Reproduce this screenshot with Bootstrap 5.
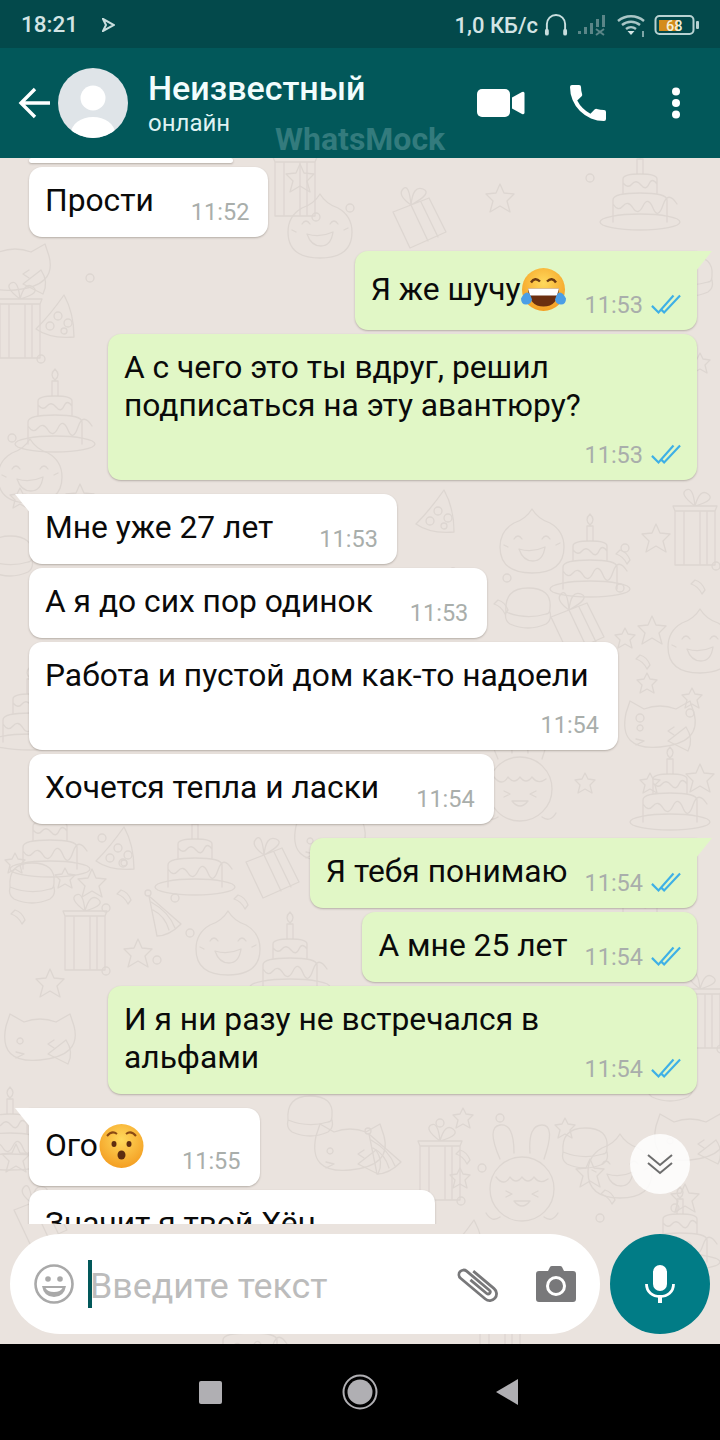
<!DOCTYPE html>
<html lang="ru">
<head>
  <meta charset="UTF-8">
  <meta name="viewport" content="width=device-width, initial-scale=1.0">
  <title>Неизвестный</title>
  <link href="https://cdn.jsdelivr.net/npm/bootstrap@5.3.3/dist/css/bootstrap.min.css" rel="stylesheet">
  <style>
    body { width: 720px; height: 1440px; overflow: hidden; font-family: Roboto, "Liberation Sans", sans-serif; background: #000; }
    .phone { height: 1440px; }
    .status-bar { height: 48px; padding: 2px 20px 0 21px; background: #03494b; color: #d3e4e4; font-size: 22.5px; font-weight: 500; }
    .net-speed { margin-left: auto; margin-right: 6px; font-size: 22px; }
    .head-set { margin-right: 9px; }
    .sig-bars { margin-right: 10px; }
    .wifi-mark { margin-right: 6px; }
    .chat-head { height: 110px; background: #02585a; color: #fff; position: relative; }
    .back-arrow { margin-left: 18px; }
    .avatar { width: 70px; height: 70px; margin-left: 8px; }
    .peer { margin-left: 20px; }
    .peer-name { font-size: 34px; font-weight: 500; line-height: 40px; margin-top: -2px; color: #f2fdfd; }
    .peer-state { font-size: 24px; line-height: 28px; color: #dff2f2; margin-top: 1px; }
    .watermark { position: absolute; left: 275px; top: 73px; font-size: 32px; font-weight: 700; line-height: 36px; color: #337b7d; }
    .video-icon { margin-right: 39px; }
    .dots-icon { margin-left: 58px; margin-right: 38px; }
    .chat-area { height: 1186px; background: #eae3de; position: relative; overflow: hidden; }
    .doodles { position: absolute; left: 0; top: 0; color: #ddd6d1; }
    .msg-list { position: relative; height: 1066px; overflow: hidden; padding: 0 23px 0 29px; }
    .bubble { position: relative; padding: 15px 19px 11px 16px; font-size: 31.75px; line-height: 38px; color: #0a0a0a; border-radius: 13px; box-shadow: 0 1px 2px rgba(60, 50, 40, .3); flex: none; }
    .in { background: #fff; align-self: flex-start; }
    .out { background: #e1f7c6; align-self: flex-end; padding-right: 16px; }
    .gap-same { margin-top: 4px; }
    .gap-new { margin-top: 14px; }
    .stub { width: 204px; height: 5px; padding: 0; margin-top: 0; }
    .wide { width: 589px; }
    .cut-off { width: 406px; }
    .msg-text { margin-bottom: 6px; white-space: nowrap; }
    .with-emoji { line-height: 46px; }
    .out .with-emoji { line-height: 47px; }
    .with-emoji svg { vertical-align: top; margin-left: 0; }
    .meta { font-size: 23.5px; line-height: 28px; color: #a9aeab; white-space: nowrap; }
    .in .meta { margin-left: 37px; }
    .out .meta { margin-left: 17px; }
    .in .meta-far { margin-left: 46px; }
    .meta svg { margin-left: 8px; vertical-align: -2px; }
    .meta-row { margin-top: 16px; }
    .meta-row .meta, .in .meta-row .meta { margin-left: 0; }
    .tail-in::before, .tail-out::before { content: ""; position: absolute; top: 0; width: 16px; height: 20px; }
    .tail-in { border-top-left-radius: 0; }
    .tail-in::before { left: -14px; background: #fff; clip-path: polygon(0 0, 100% 0, 100% 100%); }
    .tail-out { border-top-right-radius: 0; }
    .tail-out::before { right: -15px; background: #e1f7c6; clip-path: polygon(0 0, 100% 0, 0 100%); }
    .jump-btn { position: absolute; left: 630px; top: 976px; width: 60px; height: 60px; background: rgba(255, 255, 255, .85); }
    .composer { position: absolute; left: 10px; right: 10px; top: 1076px; height: 100px; gap: 10px; }
    .input-pill { width: 590px; height: 100px; background: #fff; border-radius: 50px; padding: 0 24px; }
    .caret-line { width: 4px; height: 48px; background: #02585a; margin-left: 14px; flex: none; }
    .hint { font-size: 35.8px; color: #bcbcbc; margin-left: -2px; margin-top: 6px; white-space: nowrap; }
    .clip-icon { margin-left: auto; }
    .camera-icon { margin-left: 36px; }
    .mic-btn { width: 100px; height: 100px; background: #017c86; flex: none; }
    .nav-keys { height: 96px; background: #000; padding-left: 199px; }
    .nav-square { width: 23px; height: 23px; background: #b0afb3; border-radius: 2px; }
    .nav-home { margin-left: 120px; }
    .nav-back { margin-left: 117px; }
  </style>
</head>
<body>
  <div class="phone d-flex flex-column">
    <div class="status-bar d-flex align-items-center">
      <span>18:21</span>
      <svg class="ms-4" width="13" height="14" viewBox="0 0 13 14"><path d="M1 1l11 6-11 6 3-6z" fill="none" stroke="#c9dede" stroke-width="2"/></svg>
      <span class="net-speed">1,0 КБ/с</span>
      <svg class="head-set" width="24" height="26" viewBox="0 0 25 26"><path d="M3 20V12a9.500 9.500 0 0 1 19 0v8" fill="none" stroke="#c9dede" stroke-width="2"/><rect x="1" y="17" width="4" height="7" rx="2" fill="#c9dede"/><rect x="20" y="17" width="4" height="7" rx="2" fill="#c9dede"/></svg>
      <svg class="sig-bars" width="29" height="22" viewBox="0 0 29 22"><g fill="#5b8688"><rect x="1" y="17" width="3" height="3"/><rect x="7" y="13" width="3" height="7"/><rect x="13" y="9" width="3" height="11"/><rect x="19" y="5" width="3" height="8"/><rect x="25" y="1" width="3" height="12"/></g><path d="M19 15l8 6m0-6l-8 6" stroke="#5b8688" stroke-width="2"/></svg>
      <svg class="wifi-mark" width="32" height="24" viewBox="0 0 32 24"><path d="M2 8a20 20 0 0 1 26 0M6 12a14 14 0 0 1 18 0M10 16a8 8 0 0 1 10 0" fill="none" stroke="#a9c6c6" stroke-width="2.400"/><path d="M15 22l-3.500-4h7z" fill="#d3e4e4"/><path d="M27 24v-6" stroke="#a9c6c6" stroke-width="1.500"/></svg>
      <svg width="46" height="22" viewBox="0 0 46 22"><rect x="1.500" y="2" width="38" height="18" rx="4" fill="none" stroke="#b8d2d2" stroke-width="2"/><rect x="5" y="6" width="19" height="11" fill="#d48c1c"/><rect x="42" y="7" width="3" height="8" rx="1" fill="#b8d2d2"/><text x="12" y="17" font-family="Roboto" font-size="14.500" font-weight="500" fill="#f4efd8">68</text></svg>
    </div>

    <div class="chat-head d-flex align-items-center">
      <svg class="back-arrow" width="32" height="32" viewBox="0 0 32 32" fill="none" stroke="#fff" stroke-width="3.400"><path d="M32 16H4M17 2L3 16l14 14"/></svg>
      <svg class="avatar" viewBox="0 0 70 70"><defs><clipPath id="av"><circle cx="35" cy="35" r="35"/></clipPath></defs><circle cx="35" cy="35" r="35" fill="#dfe4e8"/><g clip-path="url(#av)" fill="#fff"><circle cx="35" cy="30" r="12.500"/><ellipse cx="35" cy="65" rx="22" ry="16"/></g></svg>
      <div class="peer">
        <div class="peer-name">Неизвестный</div>
        <div class="peer-state">онлайн</div>
      </div>
      <div class="watermark">WhatsMock</div>
      <div class="d-flex align-items-center ms-auto">
        <svg class="video-icon" width="48" height="30" viewBox="0 0 48 30" fill="#fff"><rect x="0" y="1" width="33" height="28" rx="5"/><path d="M35 9.500l10-5.500q2.500-1 2.500 1.500v19q0 2.500-2.500 1.500l-10-5.500z"/></svg>
        <svg width="48" height="48" viewBox="0 0 24 24" fill="#fff"><path d="M6.620 10.790a15.150 15.150 0 0 0 6.590 6.590l2.200-2.200a1 1 0 0 1 1.020-.24 11.400 11.400 0 0 0 3.570.57 1 1 0 0 1 1 1V20a1 1 0 0 1-1 1A17 17 0 0 1 3 4a1 1 0 0 1 1-1h3.500a1 1 0 0 1 1 1c0 1.250.2 2.450.57 3.570a1 1 0 0 1-.25 1.020z"/></svg>
        <svg class="dots-icon" width="12" height="32" viewBox="0 0 12 32" fill="#fff"><circle cx="6" cy="4.500" r="4"/><circle cx="6" cy="16" r="4"/><circle cx="6" cy="27.500" r="4"/></svg>
      </div>
    </div>

    <div class="chat-area">
      <svg class="doodles" width="720" height="1186" viewBox="0 0 720 1186" fill="none" stroke="currentColor" stroke-width="1.300" stroke-linecap="round" stroke-linejoin="round">
        <defs>
          <g id="d-cake"><ellipse cx="0" cy="24" rx="40" ry="8"/><path d="M-27 24V2q0-7 27-7t27 7v22M-27 6q5 8 10 2t10 2 10-2 10 2 10-3 14-1M-17-5v-14q0-5 17-5t17 5v14M-17-15q5 6 9 1t9 1 8-1 8 0M-3-24v-15h6v15M0-40q-6-5 0-11q6 6 0 11z"/></g>
          <g id="d-tall"><path d="M-20-24h40v54h-40zM-11-24v54M5-24v54M12-24v54M-20-24l-2-5h44l-2 5M0-29q-16-12-9-16t9 16q5-18 13-12t-13 12"/><circle cx="21" cy="31" r="4"/></g>
          <g id="d-box"><path d="M-26-8L10-22 27 12-9 28zM-26-8L-9 28M-8-15L9 21M2-18l17 35M-8-15q-14-10-8-16t8 16q2-20 12-16t-12 16"/></g>
          <g id="d-hat"><path d="M4-28Q-10-8-24 6q14 10 38 8Q14-10 4-28z"/><circle cx="-2" cy="-7" r="4"/><circle cx="8" cy="0" r="4"/><circle cx="-10" cy="3" r="4"/><circle cx="4" cy="8" r="3"/></g>
          <g id="d-cone"><path d="M-16-24L16 4Q4 16-8 16zM-12-10Q0-4 4 10M-14-18Q4-8 10 8"/><circle cx="-17" cy="-27" r="3"/></g>
          <g id="d-face"><path d="M0-34q6 10 18 14 14 8 14 24 0 26-32 26t-32-26q0-16 14-24q12-4 18-14z"/><path d="M-18-4q4-6 8 0M10-4q4-6 8 0M-13 6q13 4 26-2-2 14-12 14t-14-12zM-28 2l4 2M28 0l-4 2"/></g>
          <g id="d-cat"><path d="M-34-22l4-12 14 8q16-6 32 0l14-8 4 12q8 30-34 34t-34-34zM-20-10a3 3 0 1 0 .1 0M-24 4l8 2-8 4M14-8l-6 4 6 4"/><path d="M8 6L26-8Q34 4 28 16z"/></g>
          <g id="d-bun"><path d="M-22 2q-2-24 22-24t22 20q0 6-4 6-20 6-40-2zM-22 2q-2 8 4 12 18 8 36 0 6-4 4-12"/></g>
          <g id="d-girl"><path d="M-22-24q-14-32 0-34t14 28M8-30q-2-28 12-28t2 34"/><circle cx="0" cy="6" r="32"/><path d="M-26-6q8 10 14 0 6 8 12 0 6 8 12 0 6 8 14 2M-16 8l6 3-6 3M16 8l-6 3 6 3M-8 18q8 10 16 0zM-36 30q6 10 14 4M36 30q-6 10-14 4"/></g>
          <path id="d-star" d="M0-10l3 6 7 1-5 5 2 8-7-4-7 4 2-8-5-5 7-1z"/>
          <path id="d-bigstar" d="M0-14l4 9 10 1-7 7 3 11-10-6-10 6 3-11-7-7 10-1z"/>
          <path id="d-bit" d="M-5-8q7 2 10 10l-3 4q-4-8-11-10z"/>
          <circle id="d-ring" r="4"/>
        </defs>
        <use href="#d-box" x="419" y="62"/><use href="#d-tall" x="295" y="28"/><use href="#d-cake" x="640" y="40"/><use href="#d-bun" x="690" y="120"/>
        <use href="#d-face" x="320" y="70"/><use href="#d-cat" x="620" y="130"/><use href="#d-cat" x="15" y="120"/><use href="#d-hat" x="60" y="165"/>
        <use href="#d-cake" x="55" y="262"/><use href="#d-tall" x="20" y="170"/><use href="#d-bun" x="10" y="400"/><use href="#d-face" x="30" y="315"/>
        <use href="#d-face" x="532" y="385"/><use href="#d-cake" x="590" y="407"/><use href="#d-tall" x="695" y="377"/><use href="#d-bun" x="528" y="452"/>
        <use href="#d-box" x="577" y="467"/><use href="#d-face" x="700" y="485"/><use href="#d-cat" x="660" y="577"/><use href="#d-girl" x="520" y="625"/>
        <use href="#d-cake" x="670" y="640"/><use href="#d-hat" x="440" y="360"/><use href="#d-cone" x="470" y="440"/><use href="#d-cake" x="30" y="560"/>
        <use href="#d-cake" x="50" y="687"/><use href="#d-hat" x="120" y="697"/><use href="#d-cake" x="195" y="705"/><use href="#d-box" x="272" y="712"/>
        <use href="#d-bun" x="32" y="727"/><use href="#d-tall" x="85" y="782"/><use href="#d-cone" x="165" y="762"/><use href="#d-face" x="228" y="787"/>
        <use href="#d-cake" x="290" y="805"/><use href="#d-cat" x="330" y="690"/><use href="#d-cat" x="40" y="890"/><use href="#d-cake" x="10" y="980"/>
        <use href="#d-bun" x="310" y="960"/><use href="#d-cat" x="350" y="1000"/><use href="#d-cone" x="385" y="1000"/><use href="#d-tall" x="440" y="1012"/>
        <use href="#d-girl" x="522" y="1025"/><use href="#d-bun" x="585" y="992"/><use href="#d-cat" x="690" y="990"/><use href="#d-cake" x="680" y="1080"/>
        <use href="#d-cake" x="640" y="760"/><use href="#d-tall" x="700" y="860"/><use href="#d-bun" x="670" y="925"/><use href="#d-face" x="620" y="1010"/>
        <use href="#d-hat" x="470" y="1090"/><use href="#d-cake" x="250" y="1180"/><use href="#d-tall" x="500" y="1180"/><use href="#d-box" x="40" y="1060"/>
        <use href="#d-bigstar" x="92" y="725"/><use href="#d-bigstar" x="138" y="795"/><use href="#d-bigstar" x="50" y="825"/><use href="#d-bigstar" x="656" y="380"/>
        <use href="#d-bigstar" x="652" y="472"/><use href="#d-bigstar" x="700" y="620"/><use href="#d-bigstar" x="590" y="1015"/><use href="#d-bigstar" x="685" y="1040"/>
        <use href="#d-bigstar" x="300" y="20"/><use href="#d-bigstar" x="500" y="40"/><use href="#d-bigstar" x="80" y="340"/><use href="#d-bigstar" x="16" y="1000"/>
        <use href="#d-star" x="15" y="705"/><use href="#d-star" x="65" y="720"/><use href="#d-star" x="625" y="480"/><use href="#d-star" x="647" y="525"/>
        <use href="#d-star" x="692" y="540"/><use href="#d-star" x="585" y="625"/><use href="#d-star" x="650" y="625"/><use href="#d-star" x="460" y="1020"/>
        <use href="#d-star" x="565" y="970"/><use href="#d-star" x="463" y="960"/><use href="#d-star" x="20" y="340"/><use href="#d-star" x="700" y="205"/>
        <use href="#d-bit" x="126" y="740"/><use href="#d-bit" x="20" y="760"/><use href="#d-bit" x="243" y="745"/><use href="#d-bit" x="645" y="505"/>
        <use href="#d-bit" x="560" y="565"/><use href="#d-bit" x="625" y="400"/><use href="#d-bit" x="503" y="450"/><use href="#d-bit" x="700" y="430"/>
        <use href="#d-bit" x="465" y="1000"/><use href="#d-bit" x="660" y="1010"/><use href="#d-bit" x="610" y="1040"/><use href="#d-bit" x="40" y="30"/>
        <use href="#d-ring" x="102" y="680"/><use href="#d-ring" x="123" y="705"/><use href="#d-ring" x="175" y="740"/><use href="#d-ring" x="190" y="775"/>
        <use href="#d-ring" x="106" y="750"/><use href="#d-ring" x="157" y="802"/><use href="#d-ring" x="620" y="430"/><use href="#d-ring" x="507" y="420"/>
        <use href="#d-ring" x="690" y="555"/><use href="#d-ring" x="625" y="390"/><use href="#d-ring" x="640" y="560"/><use href="#d-ring" x="440" y="965"/>
        <use href="#d-ring" x="482" y="1010"/><use href="#d-ring" x="600" y="1060"/><use href="#d-ring" x="675" y="1050"/><use href="#d-ring" x="500" y="960"/>
        <use href="#d-ring" x="12" y="280"/><use href="#d-ring" x="90" y="120"/><use href="#d-ring" x="350" y="50"/><use href="#d-ring" x="590" y="20"/>
      </svg>

      <div class="msg-list d-flex flex-column">
        <div class="bubble in stub"></div>

        <div class="bubble in gap-same d-flex align-items-end">
          <div class="msg-text">Прости</div><div class="meta">11:52</div>
        </div>

        <div class="bubble out tail-out gap-new d-flex align-items-end">
          <div class="msg-text with-emoji">Я же шучу<svg width="47" height="47" viewBox="0 0 47 46"><use href="#joy"/></svg></div>
          <div class="meta">11:53<svg width="30" height="22" viewBox="0 0 32 22"><use href="#seen"/></svg></div>
        </div>

        <div class="bubble out wide gap-same">
          <div class="msg-text">А с чего это ты вдруг, решил<br>подписаться на эту авантюру?</div>
          <div class="meta-row d-flex justify-content-end"><div class="meta">11:53<svg width="30" height="22" viewBox="0 0 32 22"><use href="#seen"/></svg></div></div>
        </div>

        <div class="bubble in tail-in gap-new d-flex align-items-end">
          <div class="msg-text">Мне уже 27 лет</div><div class="meta meta-far">11:53</div>
        </div>

        <div class="bubble in gap-same d-flex align-items-end">
          <div class="msg-text">А я до сих пор одинок</div><div class="meta">11:53</div>
        </div>

        <div class="bubble in wide gap-same">
          <div class="msg-text">Работа и пустой дом как-то надоели</div>
          <div class="meta-row d-flex justify-content-end"><div class="meta">11:54</div></div>
        </div>

        <div class="bubble in gap-same d-flex align-items-end">
          <div class="msg-text">Хочется тепла и ласки</div><div class="meta">11:54</div>
        </div>

        <div class="bubble out tail-out gap-new d-flex align-items-end">
          <div class="msg-text">Я тебя понимаю</div>
          <div class="meta">11:54<svg width="30" height="22" viewBox="0 0 32 22"><use href="#seen"/></svg></div>
        </div>

        <div class="bubble out gap-same d-flex align-items-end">
          <div class="msg-text">А мне 25 лет</div>
          <div class="meta">11:54<svg width="30" height="22" viewBox="0 0 32 22"><use href="#seen"/></svg></div>
        </div>

        <div class="bubble out wide gap-same d-flex align-items-end justify-content-between">
          <div class="msg-text">И я ни разу не встречался в<br>альфами</div>
          <div class="meta">11:54<svg width="30" height="22" viewBox="0 0 32 22"><use href="#seen"/></svg></div>
        </div>

        <div class="bubble in tail-in gap-new d-flex align-items-end">
          <div class="msg-text with-emoji">Ого<svg width="47" height="46" viewBox="0 0 47 46"><use href="#hushed"/></svg></div>
          <div class="meta">11:55</div>
        </div>

        <div class="bubble in cut-off gap-same">
          <div class="msg-text">Значит я твой Хён</div>
        </div>
      </div>

      <div class="jump-btn rounded-circle d-flex align-items-center justify-content-center">
        <svg width="26" height="22" viewBox="0 0 26 22" fill="none" stroke="#6d6d6d" stroke-width="2"><path d="M1 2l12 10L25 2M1 10l12 10 12-10"/></svg>
      </div>

      <div class="composer d-flex">
        <div class="input-pill d-flex align-items-center">
          <svg width="40" height="40" viewBox="0 0 40 40"><circle cx="20" cy="20" r="18.500" fill="none" stroke="#a9a9a9" stroke-width="2.600"/><circle cx="14" cy="15" r="2.800" fill="#a9a9a9"/><circle cx="26" cy="15" r="2.800" fill="#a9a9a9"/><path d="M8 22h24q-2 11-12 11T8 22z" fill="#a9a9a9"/><path d="M11.500 24h17q-2 4-8.500 4t-8.500-4z" fill="#fff"/></svg>
          <div class="caret-line"></div>
          <div class="hint">Введите текст</div>
          <svg class="clip-icon" width="44" height="40" viewBox="0 0 44 40"><g transform="translate(22 20) rotate(40) scale(.85)" fill="none" stroke="#78787a" stroke-width="3.300"><path d="M-14-8H18a8 8 0 0 1 0 16H-20a5.500 5.500 0 0 1 0-11H15a2.500 2.500 0 0 1 0 5H-10"/></g></svg>
          <svg class="camera-icon" width="40" height="36" viewBox="0 0 40 36"><path d="M3 5h9l2-4q.5-1 2-1h8q1.500 0 2 1l2 4h9q3 0 3 3v25q0 3-3 3H3q-3 0-3-3V8q0-3 3-3z" fill="#78787a"/><circle cx="20" cy="20" r="8.500" fill="none" stroke="#fff" stroke-width="3"/></svg>
        </div>
        <div class="mic-btn rounded-circle d-flex align-items-center justify-content-center">
          <svg width="30" height="38" viewBox="0 0 30 38"><rect x="8" y="0" width="14" height="26" rx="7" fill="#fff"/><path d="M1.500 19c0 8 6 12.500 13.500 12.500S28.500 27 28.500 19" fill="none" stroke="#fff" stroke-width="2.800"/><rect x="13" y="30" width="4" height="8" fill="#fff"/></svg>
        </div>
      </div>
    </div>

    <div class="nav-keys d-flex align-items-center">
      <div class="nav-square"></div>
      <svg class="nav-home" width="36" height="36" viewBox="0 0 36 36"><circle cx="18" cy="18" r="16.500" fill="none" stroke="#b0afb3" stroke-width="2"/><circle cx="18" cy="18" r="12.500" fill="#b0afb3"/></svg>
      <svg class="nav-back" width="24" height="26" viewBox="0 0 24 26"><path d="M1 13L23 0v26z" fill="#b0afb3"/></svg>
    </div>
  </div>

  <svg width="0" height="0" class="position-absolute">
    <defs>
      <g id="seen" fill="none" stroke="#3eb0e6" stroke-width="2.300"><path d="M1 13l7 7L24 2M11 17l3 3L31 2"/></g>
      <radialGradient id="face" cx="50%" cy="35%" r="70%"><stop offset="0" stop-color="#ffd95c"/><stop offset="1" stop-color="#f39a1e"/></radialGradient>
      <g id="joy"><circle cx="23.500" cy="23" r="21.500" fill="url(#face)"/><path d="M8 22h31q-1 18-15.500 18T8 22z" fill="#6b2f10"/><path d="M8 22h31l-2 7H10z" fill="#fff"/><path d="M11 16q4-6 9-1M27 15q5-5 9 1" fill="none" stroke="#6b3a12" stroke-width="2.400"/><path d="M1 32q3-6 6-6t5 7q-1 5-6 5t-5-6zM46 32q-3-6-6-6t-5 7q1 5 6 5t5-6z" fill="#4a9ee6"/></g>
      <g id="hushed"><circle cx="23.500" cy="23" r="22" fill="url(#face)"/><path d="M9 13q5-6 10-2M28 11q5-4 10 2" fill="none" stroke="#8a4a14" stroke-width="2"/><ellipse cx="16" cy="21" rx="2.500" ry="3" fill="#5e2d10"/><ellipse cx="31" cy="21" rx="2.500" ry="3" fill="#5e2d10"/><ellipse cx="23.500" cy="32" rx="4" ry="4.500" fill="#5e2d10"/></g>
    </defs>
  </svg>

  <script src="https://cdn.jsdelivr.net/npm/bootstrap@5.3.3/dist/js/bootstrap.bundle.min.js"></script>
</body>
</html>
